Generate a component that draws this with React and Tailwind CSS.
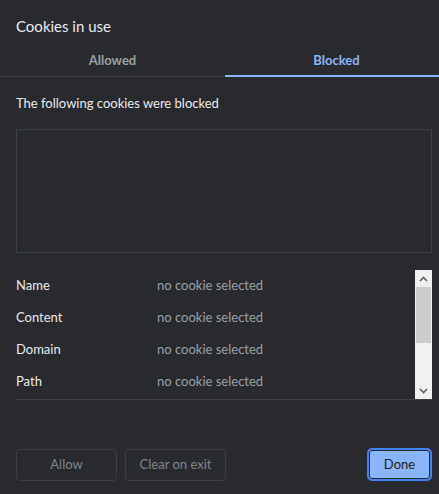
import React from 'react';

const rows = ['Name', 'Content', 'Domain', 'Path'];

const ScrollBar = () => (
  <div className="w-[17px] bg-[#f0f0f0] flex flex-col items-center shrink-0">
    <div className="h-[17px] w-full flex items-center justify-center">
      <svg width="9" height="6" viewBox="0 0 9 6">
        <path d="M1 5 L4.5 1.5 L8 5" stroke="#606060" strokeWidth="1.6" fill="none" />
      </svg>
    </div>
    <div className="w-[15px] h-[56px] bg-[#cdcdcd]" />
    <div className="flex-1" />
    <div className="h-[17px] w-full flex items-center justify-center">
      <svg width="9" height="6" viewBox="0 0 9 6">
        <path d="M1 1 L4.5 4.5 L8 1" stroke="#606060" strokeWidth="1.6" fill="none" />
      </svg>
    </div>
  </div>
);

export default function App() {
  return (
    <div className="w-[439px] h-[494px] overflow-hidden bg-[#292a2d]">
      <div
        className="w-[448px] h-[494px] bg-[#292a2d] flex flex-col text-[13px]"
        style={{ fontFamily: 'Lato, "Noto Sans", sans-serif' }}
      >
        {/* Title */}
        <div className="px-4 pt-[15px] text-[15px] leading-[22px] text-[#e8eaed]">Cookies in use</div>

        {/* Tabs */}
        <div className="flex mt-[8px]">
          <div className="w-[225px] h-[32px] flex items-center justify-center font-bold text-[#9aa0a6] shadow-[inset_0_-1px_0_#3c4043]">
            Allowed
          </div>
          <div className="flex-1 h-[32px] flex items-center justify-center font-bold text-[#8ab4f8] shadow-[inset_0_-2px_0_#8ab4f8]">
            Blocked
          </div>
        </div>

        <div className="px-4 flex flex-col flex-1">
          <div className="mt-4 leading-[20px] text-[#e8eaed]">The following cookies were blocked</div>

          {/* Cookie tree */}
          <div className="mt-4 h-[124px] border border-[#3c4043]" />

          {/* Details */}
          <div className="mt-[17px] flex h-[130px] border-b border-[#3c4043]">
            <div className="flex-1 flex flex-col">
              {rows.map((r) => (
                <div key={r} className="h-[32px] flex items-center">
                  <div className="w-[141px] text-[#e8eaed]">{r}</div>
                  <div className="text-[#9aa0a6]">no cookie selected</div>
                </div>
              ))}
            </div>
            <ScrollBar />
          </div>

          <div className="flex-1" />

          {/* Buttons */}
          <div className="flex items-center gap-2 pb-[13px]">
            <button className="w-[101px] h-[32px] rounded-[4px] border border-[#3c4043] text-[#80868b]">Allow</button>
            <button className="w-[101px] h-[32px] rounded-[4px] border border-[#3c4043] text-[#80868b]">Clear on exit</button>
            <div className="flex-1" />
            <button className="w-[65px] h-[33px] rounded-[5px] border-2 border-[#3f83ef] shadow-[inset_0_0_0_1px_#292a2d] bg-[#8ab4f8] text-[#202124]">
              Done
            </button>
          </div>
        </div>
      </div>
    </div>
  );
}
